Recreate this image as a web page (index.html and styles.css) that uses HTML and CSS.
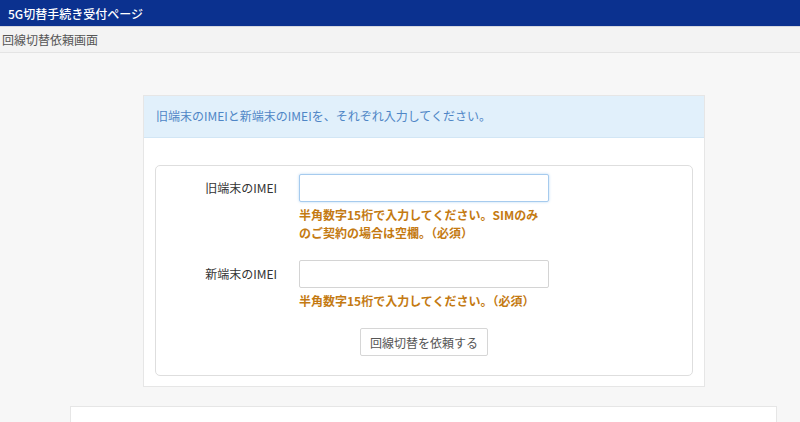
FILE: index.html
```html
<!DOCTYPE html>
<html lang="ja">
<head>
    <meta charset="UTF-8">
    <meta name="viewport" content="width=device-width, initial-scale=1.0">
    <title>5G切替手続き受付ページ</title>
    <link rel="stylesheet" href="styles.css">
</head>
<body>
    <header class="site-header">5G切替手続き受付ページ</header>
    <div class="breadcrumb">回線切替依頼画面</div>

    <main class="main">
        <div class="panel">
            <div class="panel-heading">旧端末のIMEIと新端末のIMEIを、それぞれ入力してください。</div>
            <div class="panel-body">
                <form class="form-box">
                    <div class="form-row">
                        <label class="form-label" for="old-imei">旧端末のIMEI</label>
                        <div class="form-field">
                            <input class="form-input is-focus" id="old-imei" type="text">
                            <p class="help">半角数字15桁で入力してください。SIMのみのご契約の場合は空欄。（必須）</p>
                        </div>
                    </div>
                    <div class="form-row">
                        <label class="form-label" for="new-imei">新端末のIMEI</label>
                        <div class="form-field">
                            <input class="form-input" id="new-imei" type="text">
                            <p class="help">半角数字15桁で入力してください。（必須）</p>
                        </div>
                    </div>
                    <div class="form-actions">
                        <button class="btn" type="button">回線切替を依頼する</button>
                    </div>
                </form>
            </div>
        </div>

        <div class="next-panel"></div>
    </main>
</body>
</html>
```

FILE: styles.css
```css
html, body {
    margin: 0;
    padding: 0;
    height: 100%;
}

body {
    font-family: "Noto Sans CJK JP", "Noto Sans", sans-serif;
    font-size: 12px;
    color: #333;
    background-color: #f7f7f7;
    overflow: hidden;
}

.site-header {
    height: 27px;
    line-height: 27px;
    padding-left: 8px;
    background-color: #0b318f;
    color: #fff;
    font-size: 12px;
    font-weight: 500;
    border-bottom: 1px solid #d6d8e0;
    box-sizing: border-box;
}

.breadcrumb {
    height: 26px;
    line-height: 25px;
    padding-left: 2px;
    background-color: #f3f3f3;
    border-bottom: 1px solid #e4e4e4;
    box-sizing: border-box;
    color: #555;
    font-size: 12px;
}

.main {
    padding-top: 42px;
}

.panel {
    width: 562px;
    margin-left: 143px;
    background-color: #fff;
    border: 1px solid #e6e6e6;
    box-sizing: border-box;
}

.panel-heading {
    height: 42px;
    line-height: 40px;
    padding-left: 12px;
    background-color: #e1f0fb;
    border-bottom: 1px solid #d2e6f5;
    box-sizing: border-box;
    color: #4f86c6;
}

.panel-body {
    padding: 27px 11px 10px;
}

.form-box {
    border: 1px solid #dedede;
    border-radius: 5px;
    padding: 8px 0 19px;
}

.form-row {
    display: grid;
    grid-template-columns: 121px 250px;
    column-gap: 22px;
    margin-bottom: 18px;
}

.form-label {
    text-align: right;
    line-height: 28px;
    color: #333;
}

.form-input {
    display: block;
    width: 250px;
    height: 28px;
    box-sizing: border-box;
    border: 1px solid #d4d4d4;
    border-radius: 2px;
    padding: 0 6px;
    font-family: inherit;
    font-size: 12px;
    outline: none;
}

.form-input.is-focus {
    border-color: #a6cbee;
    box-shadow: 0 0 3px #bcd9f4;
}

.help {
    margin: 4px 0 0;
    line-height: 18px;
    color: #c47a12;
    font-weight: bold;
}

.form-actions {
    display: flex;
    justify-content: center;
}

.btn {
    height: 28px;
    padding: 0 9px;
    background-color: #fff;
    border: 1px solid #d6d6d6;
    border-radius: 2px;
    color: #555;
    font-family: inherit;
    font-size: 12px;
}

.next-panel {
    width: 707px;
    height: 16px;
    margin: 19px 0 0 70px;
    background-color: #fff;
    border: 1px solid #e6e6e6;
    border-bottom: none;
    box-sizing: border-box;
}
```
